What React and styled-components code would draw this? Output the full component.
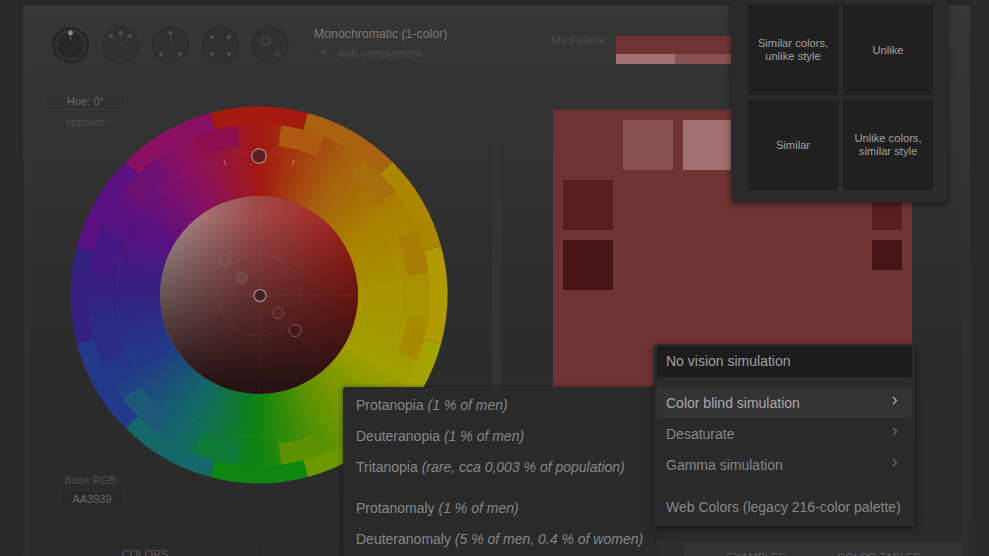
import styled, { createGlobalStyle } from 'styled-components'

const GlobalStyle = createGlobalStyle`
  html, body {
    margin: 0;
    padding: 0;
    background: #282828;
    font-family: "Liberation Sans", Arial, sans-serif;
  }
`

const Page = styled.div`
  position: relative;
  width: 989px;
  height: 556px;
  padding: 5px 19px 0 23px;
  box-sizing: border-box;
  overflow: hidden;
  background: #292929;
`
const Shell = styled.div`
  height: 600px;
  padding: 0 8px 0 7px;
  background: linear-gradient(#363636, #2f2f2f 45%, #2e2e2e);
`
const Card = styled.div`
  height: 536px;
  padding: 0 0 0 15px;
  border-radius: 0 0 8px 8px;
  background: linear-gradient(#363636, #2d2d2d 55%, #2a2a2a);
`
const Toolbar = styled.div`
  display: flex;
  height: 87px;
  padding: 21px 0 0 7px;
  box-sizing: border-box;
`
const Harmonies = styled.div`
  display: flex;
  gap: 13px;
  width: 237px;
  height: 38px;
  margin-right: 25px;
`
const ModeBox = styled.div`
  width: 237px;
  padding-top: 1px;
`
const ModeTitle = styled.div`
  font-size: 12.3px;
  line-height: 14px;
  color: #7a7a7a;
`
const Complement = styled.div`
  display: flex;
  align-items: center;
  gap: 6px;
  margin-top: 5px;
  font-size: 11.2px;
  color: #4c4c4c;
`
const Toggle = styled.span`
  display: flex;
  align-items: center;
  justify-content: center;
  width: 16px;
  height: 11px;
  border: 1px solid #3c3c3c;
  border-radius: 7px;
  &::after {
    content: '';
    width: 5px;
    height: 5px;
    border-radius: 50%;
    background: #434343;
  }
`
const PaletteLabel = styled.div`
  width: 65px;
  padding-top: 8px;
  font-size: 11.5px;
  color: #4b4b4b;
`
const PaletteStrip = styled.div`
  width: 240px;
  height: 28px;
  margin-top: 10px;
  background: #703333;
  display: flex;
  align-items: flex-end;
`
const StripTint = styled.div`
  width: ${(p) => p.$w}px;
  height: 10px;
  background: ${(p) => p.$c};
`
const Columns = styled.div`
  display: flex;
`
const WheelArea = styled.div`
  display: grid;
  width: 447px;
  height: 416px;
  & > * {
    grid-area: 1 / 1;
  }
`
const Wheel = styled.svg`
  display: block;
  width: 378px;
  height: 378px;
  margin: 14px 0 0 25px;
`
const Readout = styled.div`
  justify-self: start;
  align-self: ${(p) => (p.$bottom ? 'end' : 'start')};
  margin-left: ${(p) => (p.$bottom ? '14px' : '0')};
  width: ${(p) => (p.$bottom ? '66px' : '81px')};
  display: flex;
  flex-direction: ${(p) => (p.$bottom ? 'column-reverse' : 'column')};
  text-align: center;
`
const ReadoutBox = styled.div`
  height: 18px;
  line-height: 17px;
  box-sizing: border-box;
  border: 1px solid ${(p) => (p.$bottom ? '#303030' : '#393939')};
  background: ${(p) => (p.$bottom ? '#292929' : '#313131')};
  font-size: 11px;
  color: #6a6a6a;
`
const ReadoutNote = styled.div`
  font-size: ${(p) => (p.$bottom ? '11px' : '10.5px')};
  color: #505050;
  white-space: nowrap;
  margin: ${(p) => (p.$bottom ? '0 -4px 4px' : '6px 0 0')};
`
const Divider = styled.div`
  width: 9px;
  height: 265px;
  margin: 33px 52px 0 0;
  background: #333333;
`
const Preview = styled.div`
  display: grid;
  grid-template-columns: 50px 10px 50px 10px 50px 1fr 30px;
  grid-template-rows: 50px 50px 50px;
  row-gap: 10px;
  width: 359px;
  height: 300px;
  margin-top: 18px;
  padding: 10px;
  box-sizing: border-box;
  background: #703333;
`
const Swatch = styled.div`
  width: ${(p) => p.$size}px;
  height: ${(p) => p.$size}px;
  background: ${(p) => p.$c};
  grid-column: ${(p) => p.$col};
  grid-row: ${(p) => p.$row};
  align-self: ${(p) => p.$align || 'start'};
`
const Footer = styled.div`
  display: flex;
  align-items: flex-start;
  margin: 33px 0 0 -15px;
  font-size: 11px;
  color: #5d5d5d;
`
const LeftTabs = styled.div`
  display: flex;
  flex: none;
  padding-left: 15px;
  background: #2a2a2a;
  border-radius: 0;
`
const FooterTab = styled.div`
  flex: none;
  width: ${(p) => p.$w}px;
  padding-top: ${(p) => p.$top}px;
  text-align: center;
  white-space: nowrap;
`
const ExampleBox = styled.div`
  width: 380px;
  height: 30px;
  margin-left: 16px;
  box-sizing: border-box;
  border: 1px solid #282828;
  border-bottom: 0;
  background: #2c2c2c;
`
const SideTabs = styled.div`
  display: flex;
  flex: none;
  width: 278px;
  height: 30px;
  margin: 2px 0 0 43px;
  padding-left: 37px;
  background: #333333;
  box-sizing: border-box;
`
const Popover = styled.div`
  position: absolute;
  top: 0;
  left: 731px;
  width: 216px;
  height: 202px;
  padding: 5px 14px 0 17px;
  box-sizing: border-box;
  display: grid;
  grid-template-columns: 90px 90px;
  grid-auto-rows: 90px;
  gap: 5px;
  background: #2a2a2a;
  border-radius: 0 0 4px 4px;
  box-shadow: 0 2px 6px rgba(0, 0, 0, 0.5);
`
const StyleCell = styled.div`
  display: flex;
  align-items: center;
  justify-content: center;
  text-align: center;
  font-size: 11.2px;
  line-height: 13px;
  color: #a0a0a0;
  background: #202020;
`
const Menu = styled.div`
  position: absolute;
  left: 654px;
  top: 344px;
  width: 261px;
  height: 182px;
  padding: 2px 3px;
  box-sizing: border-box;
  background: #2a2a2a;
  border-radius: 3px;
  box-shadow: 0 2px 7px rgba(0, 0, 0, 0.55);
`
const MenuRow = styled.div`
  display: flex;
  align-items: center;
  justify-content: space-between;
  height: 31px;
  margin-top: ${(p) => p.$gap || 0}px;
  padding: 0 14px 0 9px;
  border-radius: 2px;
  font-size: 14px;
  white-space: nowrap;
  color: ${(p) => (p.$on ? '#aaaaaa' : '#878787')};
  background: ${(p) => (p.$on ? '#333333' : 'transparent')};
  ${(p) => p.$dark && 'background: #1c1c1c; color: #a0a0a0; padding-bottom: 2px; box-sizing: border-box;'}
`
const Chevron = styled.svg`
  width: 6px;
  height: 9px;
  margin-top: -4px;
  fill: none;
  stroke: ${(p) => (p.$on ? '#b0b0b0' : '#6c6c6c')};
  stroke-width: 1.2;
`
const SubMenu = styled.div`
  position: absolute;
  left: 343px;
  top: 387px;
  width: 312px;
  height: 190px;
  padding-top: 3px;
  box-sizing: border-box;
  background: #2a2a2a;
  border-radius: 3px 0 0 0;
  box-shadow: -1px 0 5px rgba(0, 0, 0, 0.4);
`
const SubItem = styled.div`
  height: 31px;
  line-height: 31px;
  margin-top: ${(p) => p.$gap || 0}px;
  padding-left: 13px;
  font-size: 14px;
  white-space: nowrap;
  color: #878787;
  em {
    font-style: italic;
  }
`

// colour per 30deg block, clockwise from the top
const BLOCKS = [
  '#a51b10', '#a9620f', '#ad8600', '#b09a00', '#a4a400', '#6c9800',
  '#0f8610', '#14686a', '#23398a', '#33207f', '#5a1080', '#8b1063',
]
const INNER = [
  '#a21a11', '#a75e0f', '#a98300', '#a89400', '#9f9f00', '#689500',
  '#0e8411', '#13666b', '#223988', '#33207f', '#59107f', '#891062',
]
// teeth between the blocks, at 15, 45, 75 ... deg
const TEETH = [
  '#ac5a10', '#a8700c', '#a87c04', '#a88a00', '#9a9200', '#5c9200',
  '#107a3a', '#1c5878', '#2c2a84', '#431885', '#6c1072', '#8c1050',
]

const polar = (r, deg) => {
  const a = ((deg - 90) * Math.PI) / 180
  return [189 + r * Math.cos(a), 189 + r * Math.sin(a)]
}

const sector = (r0, r1, a0, a1) => {
  const [x0, y0] = polar(r1, a0)
  const [x1, y1] = polar(r1, a1)
  const [x2, y2] = polar(r0, a1)
  const [x3, y3] = polar(r0, a0)
  return `M${x0} ${y0}A${r1} ${r1} 0 0 1 ${x1} ${y1}L${x2} ${y2}A${r0} ${r0} 0 0 0 ${x3} ${y3}Z`
}

const hex = (c) => [1, 3, 5].map((i) => parseInt(c.slice(i, i + 2), 16))

const mix = (a, b, t) => {
  const ca = hex(a)
  const cb = hex(b)
  return `rgb(${ca.map((v, i) => Math.round(v + (cb[i] - v) * t)).join(',')})`
}

const smoothWedges = []
for (let d = 0; d < 360; d += 2) {
  const i = Math.floor(d / 30)
  const color = mix(INNER[i], INNER[(i + 1) % 12], (d % 30) / 30)
  smoothWedges.push({ d, color })
}

const HarmonyDial = ({ dim, dots, spokes, gear }) => (
  <svg width="37" height="38" viewBox="0 0 37 38">
    <circle cx="18.5" cy="19" r="18" fill={dim ? '#303030' : '#272727'} stroke={dim ? '#2c2c2c' : '#292929'} />
    <circle cx="18.5" cy="19" r="14.5" fill="none" stroke="#393939" strokeWidth="3" strokeDasharray="2 1.6" opacity={dim ? 0.3 : 1} />
    {dots.map(([x, y], i) => (
      <g key={i}>
        {spokes && (
          <line x1={dim ? 18.5 : x} y1={dim ? 19 : 15} x2={x} y2={y} stroke={dim ? '#3b3b3b' : '#5c5c5c'} />
        )}
        <circle cx={x} cy={y} r={dim ? 2 : 2.4} fill={dim ? '#515151' : '#8e8e8e'} />
      </g>
    ))}
    {gear && (
      <g fill="none" stroke="#3c3c3c">
        <circle cx="14" cy="15" r="4" strokeWidth="3" />
        <circle cx="25" cy="27" r="2.5" strokeWidth="2" />
      </g>
    )}
  </svg>
)

const ColorWheel = () => (
  <Wheel viewBox="0 0 378 378">
    <defs>
      <linearGradient id="sat" x1="0" y1="0.3" x2="1" y2="0.4">
        <stop offset="0" stopColor="#a89494" />
        <stop offset="0.45" stopColor="#a04a4a" />
        <stop offset="1" stopColor="#a51a12" />
      </linearGradient>
      <linearGradient id="val" x1="0.5" y1="0.1" x2="0.5" y2="0.95">
        <stop offset="0" stopColor="#1a0f0f" stopOpacity="0" />
        <stop offset="1" stopColor="#261212" stopOpacity="1" />
      </linearGradient>
    </defs>
    {smoothWedges.map(({ d, color }) => (
      <path key={d} d={sector(95, 172, d - 0.2, d + 2.2)} fill={color} />
    ))}
    {TEETH.map((c, k) => (
      <path key={c} d={sector(150, 171.5, 7.5 + k * 30, 22.5 + k * 30)} fill={c} />
    ))}
    {BLOCKS.map((c, i) => (
      <path key={c} d={sector(171, 188.5, i * 30 - 15, i * 30 + 15)} fill={c} />
    ))}
    <circle cx="189" cy="189" r="142" fill="none" stroke="#ffffff" strokeOpacity="0.035" />
    <circle cx="189" cy="189" r="99" fill="url(#sat)" />
    <circle cx="189" cy="189" r="99" fill="url(#val)" />
    <circle cx="189" cy="189" r="41" fill="none" stroke="#ffffff" strokeOpacity="0.05" />
    <line x1="189" y1="90" x2="189" y2="288" stroke="#ffffff" strokeOpacity="0.04" />
    <line x1="90" y1="189" x2="288" y2="189" stroke="#ffffff" strokeOpacity="0.04" />
    <path d="M154 54l1.5 6M224 54l-1.5 6" stroke="#c09090" strokeOpacity="0.7" fill="none" />
    <path d="M323 314l7 3" stroke="#c8c880" strokeOpacity="0.6" fill="none" />
    <circle cx="189" cy="50" r="7.2" fill="#5a1e1e" stroke="#a88c8c" strokeWidth="1.2" />
    <circle cx="155" cy="154.5" r="5.5" fill="#7c4c4c" stroke="#85605f" />
    <circle cx="172" cy="171.5" r="5.5" fill="#704545" stroke="#7c5a5a" />
    <circle cx="190" cy="189.5" r="6" fill="#3c2226" stroke="#a89090" strokeWidth="1.2" />
    <circle cx="208" cy="207" r="5.5" fill="#5a2626" stroke="#7a4c4c" />
    <circle cx="225" cy="224.5" r="6" fill="#451818" stroke="#84565a" />
  </Wheel>
)

const App = () => (
  <Page>
    <GlobalStyle />
    <Shell>
      <Card>
        <Toolbar>
          <Harmonies>
            <HarmonyDial dots={[[18.5, 7]]} spokes />
            <HarmonyDial dim dots={[[9, 10], [18.5, 7], [28, 10]]} spokes />
            <HarmonyDial dim dots={[[18.5, 7], [9, 28], [28, 28]]} spokes />
            <HarmonyDial dim dots={[[10, 11], [27, 11], [10, 28], [27, 28]]} spokes />
            <HarmonyDial dim dots={[]} gear />
          </Harmonies>
          <ModeBox>
            <ModeTitle>Monochromatic (1-color)</ModeTitle>
            <Complement>
              <Toggle />
              with complement
            </Complement>
          </ModeBox>
          <PaletteLabel>My Palette:</PaletteLabel>
          <PaletteStrip>
            <StripTint $w={59} $c="#a07070" />
            <StripTint $w={181} $c="#885252" />
          </PaletteStrip>
        </Toolbar>
        <Columns>
          <WheelArea>
            <ColorWheel />
            <Readout>
              <ReadoutBox>Hue: 0°</ReadoutBox>
              <ReadoutNote>opposite</ReadoutNote>
            </Readout>
            <Readout $bottom>
              <ReadoutBox $bottom>AA3939</ReadoutBox>
              <ReadoutNote $bottom>Base RGB:</ReadoutNote>
            </Readout>
          </WheelArea>
          <Divider />
          <Preview>
            <Swatch $size={50} $col={3} $row={1} $c="#885252" />
            <Swatch $size={50} $col={5} $row={1} $c="#a07070" />
            <Swatch $size={50} $col={1} $row={2} $c="#5a1e1e" />
            <Swatch $size={30} $col={7} $row={2} $align="end" $c="#5a1e1e" />
            <Swatch $size={50} $col={1} $row={3} $c="#451414" />
            <Swatch $size={30} $col={7} $row={3} $c="#451414" />
          </Preview>
        </Columns>
        <Footer>
          <LeftTabs>
            <FooterTab $w={200} $top={7}>COLORS</FooterTab>
            <ExampleBox />
          </LeftTabs>
          <SideTabs>
            <FooterTab $w={70} $top={8}>EXAMPLES</FooterTab>
            <FooterTab $w={176} $top={8}>COLOR TABLES</FooterTab>
          </SideTabs>
        </Footer>
      </Card>
    </Shell>
    <Popover>
      <StyleCell>Similar colors,<br />unlike style</StyleCell>
      <StyleCell>Unlike</StyleCell>
      <StyleCell>Similar</StyleCell>
      <StyleCell>Unlike colors,<br />similar style</StyleCell>
    </Popover>
    <SubMenu>
      <SubItem>Protanopia <em>(1 % of men)</em></SubItem>
      <SubItem>Deuteranopia <em>(1 % of men)</em></SubItem>
      <SubItem>Tritanopia <em>(rare, cca 0,003 % of population)</em></SubItem>
      <SubItem $gap={10}>Protanomaly <em>(1 % of men)</em></SubItem>
      <SubItem>Deuteranomaly <em>(5 % of men, 0.4 % of women)</em></SubItem>
    </SubMenu>
    <Menu>
      <MenuRow $dark>No vision simulation</MenuRow>
      <MenuRow $on $gap={10}>
        Color blind simulation
        <Chevron $on viewBox="0 0 6 9"><path d="M1 1l3.5 3.5L1 8" /></Chevron>
      </MenuRow>
      <MenuRow>
        Desaturate
        <Chevron viewBox="0 0 6 9"><path d="M1 1l3.5 3.5L1 8" /></Chevron>
      </MenuRow>
      <MenuRow>
        Gamma simulation
        <Chevron viewBox="0 0 6 9"><path d="M1 1l3.5 3.5L1 8" /></Chevron>
      </MenuRow>
      <MenuRow $gap={11}>Web Colors (legacy 216-color palette)</MenuRow>
    </Menu>
  </Page>
)

export default App
